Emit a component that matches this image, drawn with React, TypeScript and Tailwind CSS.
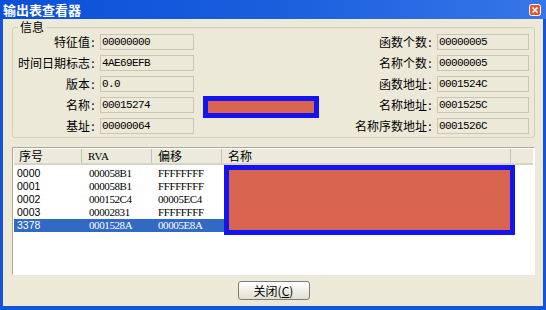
import React from "react";

const CJK = "font-['Noto_Sans_CJK_SC','Liberation_Sans',sans-serif]";
const MONO = "font-['Liberation_Mono',monospace]";
const SERIF = "font-['Liberation_Serif',serif]";
const SANS = "font-['Liberation_Sans',sans-serif]";

const INFO_LEFT = [
  ["特征值", "00000000"],
  ["时间日期标志", "4AE69EFB"],
  ["版本", "0.0"],
  ["名称", "00015274"],
  ["基址", "00000064"],
];

const INFO_RIGHT = [
  ["函数个数", "00000005"],
  ["名称个数", "00000005"],
  ["函数地址", "0001524C"],
  ["名称地址", "0001525C"],
  ["名称序数地址", "0001526C"],
];

const ROWS = [
  { no: "0000", rva: "000058B1", off: "FFFFFFFF" },
  { no: "0001", rva: "000058B1", off: "FFFFFFFF" },
  { no: "0002", rva: "000152C4", off: "00005EC4" },
  { no: "0003", rva: "00002831", off: "FFFFFFFF" },
  { no: "3378", rva: "0001528A", off: "00005E8A", selected: true },
];

function Field({ label, value }: { label: string; value: string }) {
  return (
    <>
      <div className="flex h-[16px] items-center justify-end text-[12px] leading-[16px] text-black">
        {label}
        <span className="w-[6px] text-center">:</span>
      </div>
      <div
        className={`h-[16px] border border-[#c9c6b6] bg-[#ece9d8] pl-[1px] text-[11px] leading-[14px] tracking-[-0.6px] text-black ${MONO}`}
      >
        {value}
      </div>
    </>
  );
}

export default function App() {
  return (
    <div className={`flex h-[310px] w-[546px] flex-col bg-[#1553d8] ${CJK}`}>
      {/* title bar */}
      <div className="flex h-[19px] items-center justify-between bg-gradient-to-r from-[#0b4fd8] via-[#1a5edd] to-[#3576e8] pl-[3px] pr-[5px]">
        <span className="text-[13px] font-bold leading-[19px] text-white">输出表查看器</span>
        <svg width="12" height="12" viewBox="0 0 12 12">
          <rect x="0.5" y="0.5" width="11" height="11" rx="2" fill="#e0582f" stroke="#ffffff" />
          <path d="M3.5 3.5 L8.5 8.5 M8.5 3.5 L3.5 8.5" stroke="#ffffff" strokeWidth="1.6" />
        </svg>
      </div>

      <div className="mx-[3px] mb-[4px] flex flex-1 flex-col bg-[#ece9d8] pl-[9px] pr-[8px]">
        {/* info group */}
        <fieldset className="mt-[1px] rounded-[3px] border border-[#d0d0bf] pb-[3px]">
          <legend className="ml-[5px] px-[2px] text-[12px] leading-[14px] text-black">信息</legend>
          <div className="relative flex justify-between pr-[5px]">
            <div className="grid grid-cols-[83px_94px] gap-x-[4px] gap-y-[5px]">
              {INFO_LEFT.map(([l, v]) => (
                <Field key={l} label={l} value={v} />
              ))}
            </div>
            <div className="grid grid-cols-[auto_92px] gap-x-[4px] gap-y-[5px]">
              {INFO_RIGHT.map(([l, v]) => (
                <Field key={l} label={l} value={v} />
              ))}
            </div>
            <div className="absolute left-[190px] top-[62px] h-[22px] w-[116px] border-[5px] border-[#1414f0] bg-[#d9644f]" />
          </div>
        </fieldset>

        {/* export list */}
        <div className="relative mt-[9px] h-[128px] border border-[#aca899] border-b-white border-r-white bg-white p-[1px]">
          <div className="flex h-[16px] border-b-2 border-[#d8d4c4] bg-[#ebeadb] text-[12px] leading-[14px] text-black">
            <div className="w-[68px] border-r border-[#c5c2b2] pl-[5px]">序号</div>
            <div className={`w-[70px] border-r border-[#c5c2b2] pl-[6px] text-[11px] ${SERIF}`}>RVA</div>
            <div className="w-[70px] border-r border-[#c5c2b2] pl-[6px]">偏移</div>
            <div className="w-[289px] border-r border-[#c5c2b2] pl-[6px]">名称</div>
            <div className="flex-1" />
          </div>
          <div className="mt-[2px] flex flex-col">
            {ROWS.map((r) => (
              <div
                key={r.no}
                className={`flex h-[13px] w-[497px] items-center leading-[13px] ${
                  r.selected ? "bg-[#316ac5] text-white" : "text-black"
                }`}
              >
                <div className={`w-[68px] pl-[3px] text-[10.5px] ${SANS}`}>{r.no}</div>
                <div className={`w-[70px] pl-[7px] text-[11px] tracking-[-0.4px] ${SERIF}`}>{r.rva}</div>
                <div className={`w-[70px] pl-[6px] text-[11px] tracking-[-0.4px] ${SERIF}`}>{r.off}</div>
                <div className="w-[289px]" />
              </div>
            ))}
          </div>
          <div className="absolute left-[211px] top-[17px] h-[70px] w-[291px] border-[5px] border-[#1414f0] bg-[#d9644f]" />
        </div>

        {/* buttons */}
        <div className="mt-[6px] flex justify-center">
          <button
            type="button"
            className="h-[19px] w-[72px] rounded-[3px] border border-[#7d7c74] bg-gradient-to-b from-white to-[#e2dfd2] text-[12px] leading-[17px] text-black"
          >
            关闭(<span className="underline">C</span>)
          </button>
        </div>
      </div>
    </div>
  );
}
